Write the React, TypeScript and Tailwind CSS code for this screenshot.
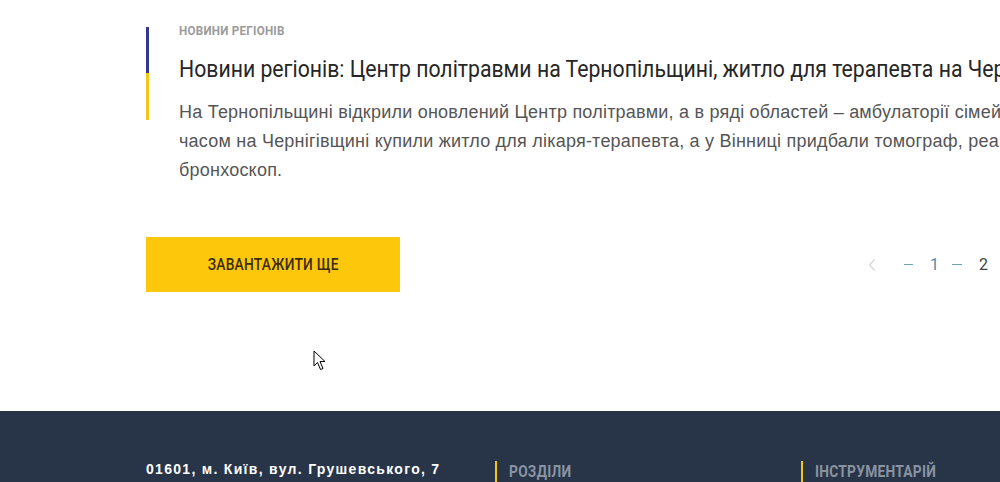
import React from "react";

const roboto = { fontFamily: 'Roboto, "Noto Sans", sans-serif' };

function Cond({ children, className = "" }: { children: React.ReactNode; className?: string }) {
  return (
    <span className={"inline-block origin-left scale-x-[0.86] whitespace-nowrap " + className} style={roboto}>
      {children}
    </span>
  );
}

export default function App() {
  return (
    <div className="relative w-[1000px] h-[482px] overflow-hidden bg-white" style={{ fontFamily: '"Liberation Sans", Arial, sans-serif' }}>
      <div className="pl-[146px] pt-[27px]">
        <div className="flex">
          <div className="flex flex-col w-[3px] shrink-0">
            <div className="h-[46px] bg-[#2f3a8f]" />
            <div className="h-[47px] bg-[#f5c518]" />
          </div>
          <div className="pl-[30px] -mt-[5px] whitespace-nowrap">
            <div className="text-[13.5px] font-bold text-[#9b9b9b] tracking-[0.3px] leading-[16px]">
              <Cond>НОВИНИ РЕГІОНІВ</Cond>
            </div>
            <div className="mt-[15px] text-[24.7px] leading-[30px] text-[#262626]">
              <Cond>Новини регіонів: Центр політравми на Тернопільщині, житло для терапевта на Чернігівщині</Cond>
            </div>
            <div className="mt-[14px] text-[18px] leading-[29px] text-[#555] tracking-[0.22px]">
              <div>На Тернопільщині відкрили оновлений Центр політравми, а в ряді областей – амбулаторії сімейної медицини. Тим</div>
              <div>часом на Чернігівщині купили житло для лікаря-терапевта, а у Вінниці придбали томограф, реанімобіль та</div>
              <div>бронхоскоп.</div>
            </div>
          </div>
        </div>
        <div className="mt-[52px] flex items-center">
          <button className="w-[254px] h-[55px] bg-[#fdc80c] text-[#3b2c0e] text-[16px] font-medium tracking-[0.3px] flex items-center justify-center">
            <span className="inline-block scale-x-[0.86] whitespace-nowrap" style={roboto}>ЗАВАНТАЖИТИ ЩЕ</span>
          </button>
          <div className="ml-auto flex items-center text-[16px] whitespace-nowrap" style={roboto}>
            <svg width="8" height="14" viewBox="0 0 8 14" className="mr-[28px]">
              <path d="M6.5 1.5 L1.5 7 L6.5 12.5" fill="none" stroke="#d4d8dc" strokeWidth="1.3" />
            </svg>
            <span className="w-[9px] h-[1px] bg-[#6aa3b4] mr-[17px]" />
            <span className="text-[#4f8ea0] mr-[13px]">1</span>
            <span className="w-[10px] h-[1px] bg-[#6aa3b4] mr-[17px]" />
            <span className="text-[#444] mr-[12px]">2</span>
          </div>
        </div>
      </div>
      <div className="absolute left-[313px] top-[350px]">
        <svg width="14" height="22" viewBox="0 0 14 22">
          <path d="M1 1 L1 16 L4.5 12.5 L7.5 19.5 L10 18.5 L7 11.5 L12 11.5 Z" fill="#fff" stroke="#000" strokeWidth="1" strokeLinejoin="round" />
        </svg>
      </div>
      <div className="absolute left-0 right-0 top-[411px] bottom-0 bg-[#283548]">
        <div className="pl-[146px] pt-[49px] flex items-start">
          <div className="w-[349px] text-[14px] font-bold text-white tracking-[1.3px] leading-[18px] whitespace-nowrap">01601, м. Київ, вул. Грушевського, 7</div>
          <div className="w-[306px] flex items-center">
            <span className="w-[2px] h-[22px] bg-[#f5c518] mr-[12px]" />
            <span className="text-[16px] font-bold text-[#8a93a1] tracking-[0.3px]"><Cond>РОЗДІЛИ</Cond></span>
          </div>
          <div className="flex items-center">
            <span className="w-[2px] h-[22px] bg-[#f5c518] mr-[12px]" />
            <span className="text-[16px] font-bold text-[#8a93a1] tracking-[0.3px]"><Cond>ІНСТРУМЕНТАРІЙ</Cond></span>
          </div>
        </div>
      </div>
    </div>
  );
}
